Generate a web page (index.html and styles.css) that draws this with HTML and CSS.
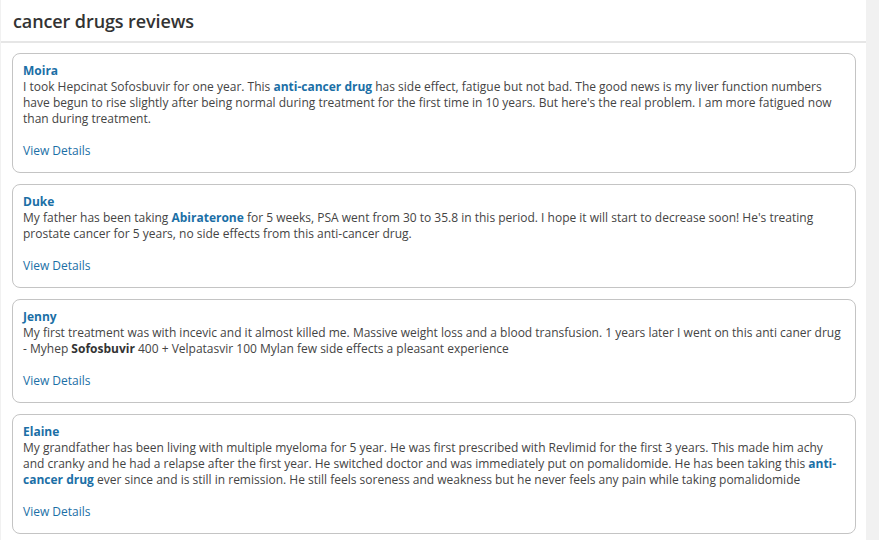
FILE: index.html
```html
<!DOCTYPE html>
<html>
<head>
<meta charset="utf-8">
<link rel="stylesheet" href="styles.css">
</head>
<body>
<div class="panel">
  <div class="header"><h1 class="title">cancer drugs reviews</h1></div>
  <div class="list">
    <div class="card">
      <div class="name">Moira</div>
      <p class="text">I took Hepcinat Sofosbuvir for one year. This <a class="kw" href="#">anti-cancer drug</a> has side effect, fatigue but not bad. The good news is my liver function numbers have begun to rise slightly after being normal during treatment for the first time in 10 years. But here's the real problem. I am more fatigued now than during treatment.</p>
      <a class="more" href="#">View Details</a>
    </div>
    <div class="card">
      <div class="name">Duke</div>
      <p class="text">My father has been taking <a class="kw" href="#">Abiraterone</a> for 5 weeks, PSA went from 30 to 35.8 in this period. I hope it will start to decrease soon! He's treating prostate cancer for 5 years, no side effects from this anti-cancer drug.</p>
      <a class="more" href="#">View Details</a>
    </div>
    <div class="card">
      <div class="name">Jenny</div>
      <p class="text">My first treatment was with incevic and it almost killed me. Massive weight loss and a blood transfusion. 1 years later I went on this anti caner drug - Myhep <b>Sofosbuvir</b> 400 + Velpatasvir 100 Mylan few side effects a pleasant experience</p>
      <a class="more" href="#">View Details</a>
    </div>
    <div class="card">
      <div class="name">Elaine</div>
      <p class="text">My grandfather has been living with multiple myeloma for 5 year. He was first prescribed with Revlimid for the first 3 years. This made him achy and cranky and he had a relapse after the first year. He switched doctor and was immediately put on pomalidomide. He has been taking this <a class="kw" href="#">anti-cancer drug</a> ever since and is still in remission. He still feels soreness and weakness but he never feels any pain while taking pomalidomide</p>
      <a class="more" href="#">View Details</a>
    </div>
  </div>
</div>
</body>
</html>
```
FILE: styles.css
```css
html, body {
  margin: 0;
  padding: 0;
  background: #f1f1f1;
  font-family: "Open Sans", "Liberation Sans", sans-serif;
  color: #444;
}
.panel {
  margin-left: 1px;
  width: 865px;
  min-height: 540px;
  background: #fff;
}
.header {
  height: 41px;
  border-bottom: 2px solid #e6e6e6;
  padding-left: 12px;
  display: flex;
  align-items: center;
}
.title {
  margin: 0 0 0 0;
  font-size: 18px;
  font-weight: 600;
  color: #333;
  letter-spacing: -0.1px;
}
.list {
  padding: 10px 10px 0 11px;
  display: flex;
  flex-direction: column;
  gap: 11px;
}
.card {
  border: 1px solid #c4c4c4;
  border-radius: 8px;
  padding: 9px 10px 13px 10px;
  font-size: 12px;
  line-height: 16px;
}
.name {
  font-weight: 700;
  color: #1b6fa6;
}
.text {
  margin: 0 0 16px 0;
  color: #444;
}
.text b { color: #333; }
.kw {
  color: #1b6fa6;
  font-weight: 700;
  text-decoration: none;
}
.more {
  color: #1b6fa6;
  text-decoration: none;
}
```
